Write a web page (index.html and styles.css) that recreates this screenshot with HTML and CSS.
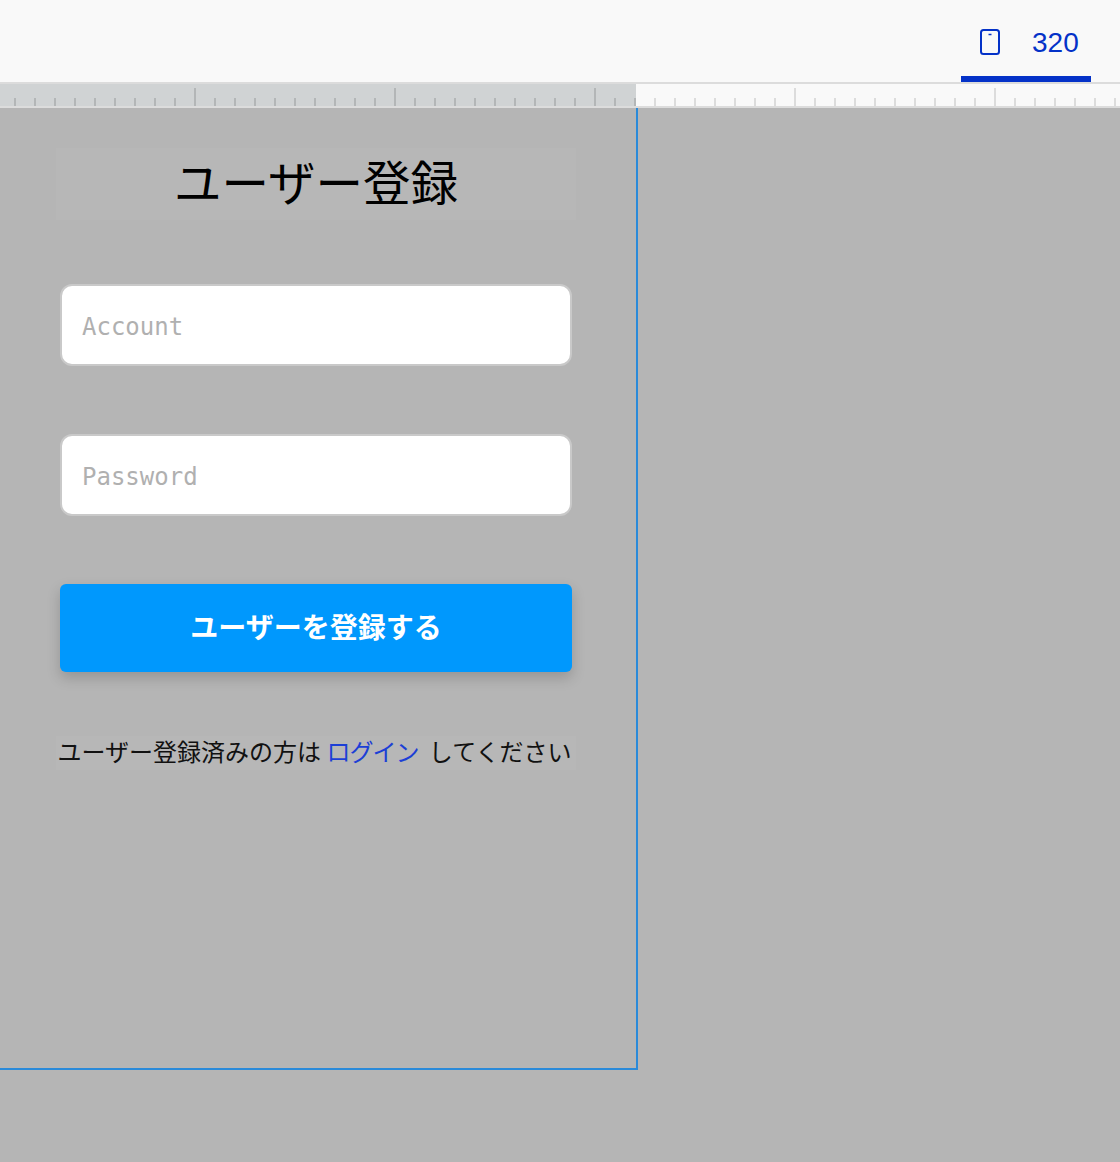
FILE: index.html
```html
<!DOCTYPE html>
<html lang="ja">
<head>
<meta charset="utf-8">
<title>ユーザー登録</title>
<link rel="stylesheet" href="styles.css">
</head>
<body>
<header class="toolbar">
  <div class="device-tab">
    <svg class="device-icon" width="22" height="28" viewBox="0 0 22 28" aria-hidden="true">
      <rect x="2" y="2" width="18" height="24" rx="2.5" fill="none" stroke="currentColor" stroke-width="2"/>
      <path d="M9.5 6.5h3" fill="none" stroke="currentColor" stroke-width="1.5"/>
    </svg>
    <span class="device-width">320</span>
  </div>
</header>
<div class="ruler"><div class="ruler-used"></div></div>
<main class="stage">
  <div class="viewport">
    <section class="form">
      <h1 class="title">ユーザー登録</h1>
      <div class="field"><input class="input" type="text" placeholder="Account"></div>
      <div class="field"><input class="input" type="password" placeholder="Password"></div>
      <button class="submit" type="button">ユーザーを登録する</button>
      <p class="note">ユーザー登録済みの方は <a class="link" href="#">ログイン</a> してください</p>
    </section>
  </div>
</main>
</body>
</html>
```
FILE: styles.css
```css
* { box-sizing: border-box; }
html, body { margin: 0; height: 100%; }
body {
  width: 1120px;
  height: 1162px;
  overflow: hidden;
  display: flex;
  flex-direction: column;
  background: #b5b5b5;
  font-family: "Liberation Sans", "Noto Sans CJK JP", sans-serif;
}
.toolbar {
  height: 82px;
  flex: none;
  display: flex;
  justify-content: flex-end;
  padding-right: 29px;
  background: #f9f9f9;
}
.device-tab {
  width: 130px;
  display: flex;
  align-items: flex-start;
  gap: 31px;
  padding: 28px 0 0 18px;
  border-bottom: 6px solid #0432c8;
  color: #0432c8;
}
.device-icon { display: block; flex: none; }
.device-width { font-size: 28px; line-height: 30px; }
.ruler {
  height: 26px;
  flex: none;
  border-top: 2px solid #dcdcdc;
  border-bottom: 2px solid #dcdcdc;
  background-color: #f9f9f9;
  background-image:
    repeating-linear-gradient(90deg, transparent 0 14px, #dcdcdc 14px 16px, transparent 16px 20px),
    repeating-linear-gradient(90deg, transparent 0 194px, #dcdcdc 194px 196px, transparent 196px 200px);
  background-size: 100% 8px, 100% 18px;
  background-position: 0 100%, 0 100%;
  background-repeat: no-repeat;
}
.ruler-used {
  width: 636px;
  height: 22px;
  background-color: #d0d3d4;
  background-image:
    repeating-linear-gradient(90deg, transparent 0 14px, #b3b6b7 14px 16px, transparent 16px 20px),
    repeating-linear-gradient(90deg, transparent 0 194px, #b3b6b7 194px 196px, transparent 196px 200px);
  background-size: 100% 8px, 100% 18px;
  background-position: 0 100%, 0 100%;
  background-repeat: no-repeat;
}
.stage { flex: 1; }
.viewport {
  width: 638px;
  height: 962px;
  border-right: 2px solid #2a8ad9;
  border-bottom: 2px solid #2a8ad9;
  padding: 40px 0 0 60px;
}
.form { width: 512px; }
.title {
  margin: 0 0 0 -4px;
  width: 520px;
  height: 72px;
  background: #b7b7b7;
  color: #000;
  font-family: "Noto Sans CJK JP", sans-serif;
  font-size: 47.5px;
  font-weight: 400;
  line-height: 65px;
  text-align: center;
}
.field { margin-top: 64px; }
.field + .field { margin-top: 68px; }
.input {
  display: block;
  width: 100%;
  height: 82px;
  padding: 3px 20px 0;
  border: 2px solid #c9c9c9;
  border-radius: 12px;
  background: #fff;
  outline: none;
  font-family: "DejaVu Sans Mono", monospace;
  font-size: 24px;
}
.input::placeholder { color: #b0b0b0; opacity: 1; }
.submit {
  display: block;
  width: 100%;
  height: 88px;
  margin-top: 68px;
  padding: 0 0 4px;
  border: 0;
  border-radius: 6px;
  background: #0098fd;
  box-shadow: 0 6px 14px rgba(0, 0, 0, 0.18);
  color: #fff;
  font-family: "Noto Sans CJK JP", sans-serif;
  font-size: 28px;
  font-weight: 700;
}
.note {
  width: 520px;
  height: 34px;
  margin: 64px 0 0 -4px;
  padding-right: 3px;
  background: #b7b7b7;
  color: #111;
  font-family: "Noto Sans CJK JP", sans-serif;
  font-size: 24px;
  line-height: 30px;
  text-align: center;
  white-space: nowrap;
}
.link {
  margin-right: 5px;
  color: #1c3fd6;
  letter-spacing: -1px;
  text-decoration: none;
}
```
